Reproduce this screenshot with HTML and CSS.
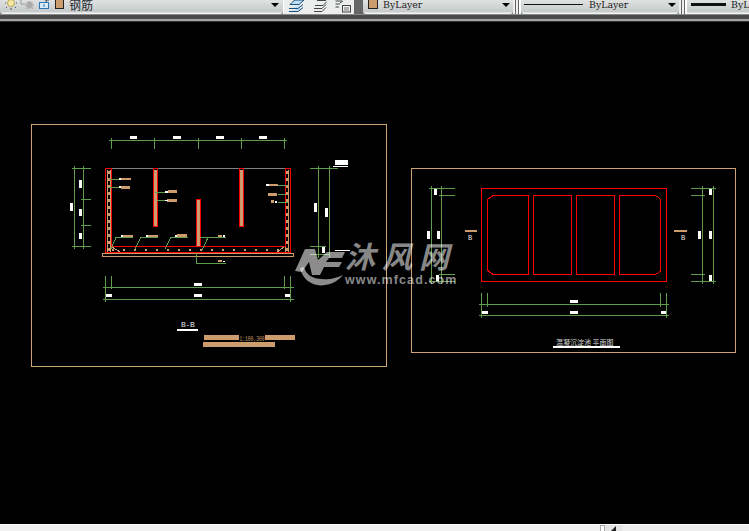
FILE: index.html
```html
<!DOCTYPE html>
<html lang="zh">
<head>
<meta charset="utf-8">
<title>CAD</title>
<link rel="stylesheet" href="styles.css">
</head>
<body>
<header class="toolbar">
  <div class="bar">
    <div class="combo layer-combo">
      <svg class="ico sun" width="14" height="11" viewBox="0 0 14 11"><circle cx="7" cy="3" r="3.500" fill="#f7e9a0" stroke="#b9a35a"/><path d="M1 3H2M12 3H13M3 7L2 8M11 7L12 8M7 8V10" stroke="#555" fill="none"/></svg>
      <svg class="ico bulb" width="15" height="11" viewBox="0 0 15 11"><path d="M1 0V4H5" stroke="#999" fill="none"/><circle cx="9.500" cy="5" r="3.500" fill="#aaa" stroke="#bbb"/><path d="M5 5H6M13 5H14M6 9L7 8M13 9L12 8" stroke="#aaa"/></svg>
      <svg class="ico lock" width="11" height="11" viewBox="0 0 11 11"><rect x=".5" y="2.500" width="9" height="6" fill="#dceaf5" stroke="#2a78b8"/><path d="M5 4V7" stroke="#2a78b8"/><path d="M7 2V0H10" stroke="#333" fill="none"/></svg>
      <span class="swatch"></span>
      <span class="layer-name">钢筋</span>
      <span class="arrow"></span>
    </div>
    <div class="tools">
      <svg width="17" height="13" viewBox="0 0 17 13"><path d="M1 11.500H10L15 7.500M1 8.500H10L15 4.500M4 2.500L7 0H16L11 4.500H2Z" fill="#bfe0f5" stroke="#1b4f7a"/></svg>
      <svg width="14" height="13" viewBox="0 0 14 13"><path d="M1 11.500H9L13 7.500M1 8.500H9L13 4.500M2 5.500H10L14 1.500M4 .5H13" fill="none" stroke="#444"/></svg>
      <svg width="16" height="13" viewBox="0 0 16 13"><path d="M.5 1H7M.5 4H5M.5 7H4M8 1L5 3" fill="none" stroke="#444"/><rect x="7.500" y="5.500" width="8" height="6.500" fill="#eee" stroke="#444"/><path d="M9 8H14M9 10H14" stroke="#777"/></svg>
    </div>
    <div class="gripper"></div>
    <div class="combo color-combo">
      <span class="swatch swatch-cut"></span>
      <span class="combo-text">ByLayer</span>
      <span class="arrow"></span>
    </div>
    <div class="split"></div>
    <div class="combo line-combo">
      <span class="sample"></span>
      <span class="combo-text">ByLayer</span>
      <span class="arrow"></span>
    </div>
    <div class="split"></div>
    <div class="combo weight-combo">
      <span class="sample sample-thick"></span>
      <span class="combo-text">ByLayer</span>
    </div>
  </div>
  <div class="strip-light"></div>
  <div class="strip-dark"></div>
  <div class="strip-mid"></div>
  <div class="strip-end"></div>
</header>

<main class="canvas">
  <svg class="drawing" viewBox="0 22 749 502" width="749" height="502" xmlns="http://www.w3.org/2000/svg">
    <!-- sheet frames -->
    <path class="ln frame" d="M31.500 124H386V366H31.500ZM411.500 168.500H735.500V352H411.500Z"/>

    <!-- section B-B: gray top line -->
    <path class="ln gray" d="M111 168.500H285"/>

    <!-- wall fill -->
    <path class="ln tan" d="M107.500 170V252M110 170V252M285.500 170V252M288.500 170V252M102.500 253.500H293.500V256.500H102.500Z"/>
    <path class="tanfill" d="M154 170H157V226H154ZM197 200H200V246H197ZM240 170H243V226H240Z"/>
    <path class="hatch" d="M108.500 171V252M287 171V252"/>
    <path class="hatch2" d="M112 249.500H285"/>
    <path class="ln tan" d="M112 247L120 252M284 247L277 252"/>

    <!-- red outlines -->
    <path class="ln red" d="M105.500 168.500H111V246.500H285V168.500H290.500V252.500H105.500ZM153.500 168.500H157.500V226.500H153.500ZM196.500 199.500H200.500V246.500H196.500ZM239.500 168.500H243.500V226.500H239.500ZM105 252.500H291"/>

    <!-- dimensions, section -->
    <path class="ln green" d="M109 140.500H287M111.500 138V149M154.500 138V149M198.500 138V149M241.500 138V149M284.500 138V149
      M74.500 166V249M83.500 166V249M72 168.500H91M81 199.500H91M81 225.500H91M72 246.500H91
      M318.500 166V258M329.500 166V258M310 168.500H338M310 246.500H326M310 254.500H329
      M103 287.500H294M103 299.500H294M105.500 276V302M111.500 276V289M284.500 276V289M290.500 276V302
      M196.500 253V263.500H226"/>
    <!-- leaders -->
    <path class="ln green" d="M109 179.500H119M109 187.500H119M155 192.500H165M157 200.500H165M278 185.500H287M278 194.500H286M278 202.500H288
      M116 237.500H133M141 237.500H158M171 237.500H188M200 237.500H226"/>
    <path class="ln greenaa" d="M116 237.500L111 249M141 237.500L135 249M171 237.500L165 249M208 237.500L202 250"/>
    <path class="tanfill" d="M121 178H131V180H121ZM121 186H130V189H121ZM168 190H177V193H168ZM167 199H177V202H167ZM123 235H133V237H123ZM148 235H158V237H148ZM177 234H187V237H177ZM218 235H222V237H218ZM269 184H278V186H269ZM268 193H277V196H268ZM271 200H274V203H271ZM218 260H222V262H218Z"/>
    <path class="whitefill" d="M130 136H137V139H130ZM173 136H181V139H173ZM216 136H224V139H216ZM259 136H267V139H259Z
      M79 180H82V188H79ZM70 203H73V211H70ZM79 209H82V216H79ZM79 233H82V239H79Z
      M119 178H121V180H119ZM119 186H121V188H119ZM165 191H168V193H165ZM165 200H168V201H165ZM121 235H123V237H121ZM146 235H148V237H146ZM175 235H177V237H175ZM223 235H225V237H223ZM266 184H269V186H266ZM275 201H277V203H275ZM223 261H225V262H223Z
      M335 160H348V165H335ZM333 166H348V167H333ZM314 203H317V212H314ZM325 208H328V217H325ZM322 247H325V253H322ZM335 250H350V251H335Z
      M194 283H202V286H194ZM106 294H112V297H106ZM194 294H202V297H194ZM285 294H290V297H285Z
      M177 329H198V331H177Z"/>
    <text class="cad-text title-bb" x="181" y="327">B-B</text>
    <path class="tanfill" d="M204 335H239V340H204ZM265 335H295V340H265ZM203 342H275V347H203Z"/>
    <text class="scale-text" x="239.500" y="340.500" textLength="25" lengthAdjust="spacingAndGlyphs">1:100,300</text>

    <!-- plan -->
    <path class="ln red" d="M481.500 188.500H666.500V281.500H481.500Z
      M493.500 195.500H528.500V274.500H493.500L490 272.500L487.500 270V199.500L490 197.500Z
      M533.500 195.500H571.500V274.500H533.500ZM576.500 195.500H614.500V274.500H576.500Z
      M619.500 195.500H655L658 197L660.500 199.500V271L658 273L655 274.500H619.500Z"/>
    <path class="ln green" d="M431.500 186V284M441.500 186V284M429 188.500H455M439 195.500H455M439 274.500H455M429 281.500H455
      M702.500 186V284M713.500 186V284M691 188.500H716M691 195.500H705M691 274.500H705M691 281.500H716
      M479 304.500H669M479 315.500H669M481.500 293V318M487.500 293V307M660.500 293V307M666.500 293V318"/>
    <path class="whitefill" d="M434 189H437V195H434ZM427 231H430V239H427ZM437 231H440V239H437ZM436 275H439V281H436Z
      M709 189H712V195H709ZM698 231H701V239H698ZM709 231H712V239H709ZM709 275H712V281H709Z
      M570 300H578V303H570ZM482 311H488V314H482ZM570 311H578V314H570ZM661 311H666V314H661Z
      M553 346H620V348H553Z"/>
    <path class="tanfill" d="M465 230H477V232H465ZM674 230H687V232H674Z"/>
    <text class="cad-text" x="468" y="239.500">B</text>
    <text class="cad-text" x="681" y="239.500">B</text>
    <text class="plan-title" x="556" y="345">混凝沉淀池 平面图</text>

    <!-- watermark -->
    <g class="mark">
      <path d="M295 271L305 249H315L318 260L327 252H345L342 258H329L326 262H342L339 267H324L320 275H312L309 262L302 272Z"/>
      <path d="M300 268C303 281 314 287 325 285C333 284 339 280 343 275C336 278 330 280 322 279C313 279 306 275 304 267Z"/>
      <text class="mark-cn" x="345" y="268">沐风网</text>
      <text class="mark-en" x="345" y="284">www.mfcad.com</text>
    </g>
  </svg>
</main>

<footer class="status">
  <div class="status-left"></div>
  <div class="status-grip"></div>
  <div class="status-mid"><span class="corner"></span></div>
  <div class="status-right"></div>
</footer>
</body>
</html>
```
FILE: styles.css
```css
* { box-sizing: border-box; }
html, body { margin: 0; padding: 0; width: 749px; height: 531px; overflow: hidden; background: #000; }
body { display: flex; flex-direction: column; font-family: "DejaVu Serif", serif; }

.toolbar { flex: none; height: 22px; display: flex; flex-direction: column; background: #000; }
.bar { height: 14px; display: flex; background: #6b6b6b; }
.strip-light { height: 1px; background: #8a8a8a; }
.strip-dark { height: 4px; background: #4b4b4b; }
.strip-mid { height: 2px; background: #a3a3a3; }
.strip-end { height: 1px; background: #333; }

.combo {
  height: 14px;
  display: flex;
  align-items: flex-start;
  background: linear-gradient(#e0e2e2, #c6caca 85%, #f2f2f2 93%);
  border-radius: 0 0 3px 3px;
  overflow: hidden;
}
.layer-combo { width: 283px; padding-left: 4px; }
.ico { flex: none; }
.sun { margin-right: 2px; }
.bulb { margin-right: 4px; }
.lock { margin-right: 5px; }
.swatch { flex: none; width: 9px; height: 9px; background: #cc9c6c; border: 1px solid #222; border-top: 0; }
.layer-name { margin-left: 5px; width: 202px; font: 12px/9px "Noto Sans CJK SC", sans-serif; color: #23272e; flex: none; }
.arrow { flex: none; width: 0; height: 0; margin-top: 3px; border: 4.5px solid transparent; border-top: 4px solid #000; border-bottom: 0; }

.tools { width: 71px; height: 15px; display: flex; gap: 8px; padding-left: 4px; background: #eceeee; border-left: 1px solid #fff; flex: none; }
.gripper { width: 9px; flex: none; background: #666 radial-gradient(#222 40%, transparent 45%) 4px 0 / 2px 2px repeat-y; }

.color-combo { width: 150px; flex: none; }
.swatch-cut { margin-left: 5px; margin-right: 5px; width: 10px; }
.combo-text { font: 9.4px/9px "DejaVu Serif", serif; color: #222; flex: none; }
.color-combo .combo-text { width: 119px; }
.split { width: 8px; flex: none; background: linear-gradient(90deg, #eee 0 2px, #666 2px 3px, #eee 3px 5px, #666 5px 6px, #fff 6px); }
.line-combo { width: 158px; flex: none; padding-left: 3px; }
.sample { flex: none; width: 59px; height: 1px; margin-top: 4px; margin-right: 6px; background: #111; }
.line-combo .combo-text { width: 79px; }
.weight-combo { flex: 1; padding-left: 4px; border-radius: 0; }
.sample-thick { width: 35px; height: 3px; margin-top: 3px; margin-right: 5px; }

.canvas { flex: none; height: 502px; background: #000; }
.drawing { display: block; }
.ln { fill: none; stroke-width: 1; shape-rendering: crispEdges; }
.frame { stroke: #cfa273; }
.gray { stroke: #808080; }
.tan { stroke: #cc9c6c; }
.red { stroke: #ff0000; }
.green { stroke: #5f9d4a; }
.greenaa { stroke: #5f9d4a; fill: none; }
.tanfill { fill: #cc9c6c; shape-rendering: crispEdges; }
.whitefill { fill: #fff; shape-rendering: crispEdges; }
.hatch { fill: none; stroke: #cc9c6c; stroke-width: 2; stroke-dasharray: 3 4; shape-rendering: crispEdges; }
.hatch2 { fill: none; stroke: #cc9c6c; stroke-width: 2; stroke-dasharray: 2 9; shape-rendering: crispEdges; }

.cad-text { font: 7px "Liberation Mono", monospace; fill: #e8e8e8; }
.title-bb { font-size: 8px; letter-spacing: -.3px; }
.scale-text { font: 7px "Liberation Mono", monospace; fill: #cc9c6c; }
.plan-title { font: 7px "Noto Sans CJK SC", sans-serif; fill: #d8d8d8; }
.mark { fill: #fff; fill-opacity: .55; }
.mark-cn { font: italic 700 30px "Noto Sans CJK SC", sans-serif; letter-spacing: 7px; }
.mark-en { font: 700 12.5px "Liberation Sans", sans-serif; letter-spacing: 1.1px; }

.status { flex: none; height: 7px; display: flex; background: #f0f0f0; border-top: 1px solid #fff; }
.status-left { width: 600px; background: #f2f2f2; }
.status-grip { width: 5px; background: #fff; border: 1px solid #aaa; border-bottom: 0; }
.status-mid { width: 17px; background: #e4e4e4; position: relative; }
.corner { position: absolute; left: 6px; bottom: 0; width: 0; height: 0; border-left: 5px solid transparent; border-bottom: 5px solid #222; }
.status-right { flex: 1; background: #ededed; }
```
